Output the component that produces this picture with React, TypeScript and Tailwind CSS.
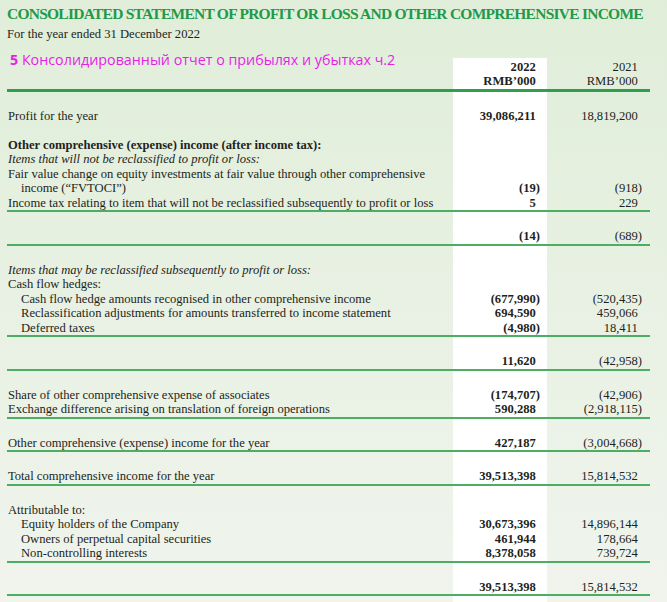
import React from 'react';

type Line = {
  label?: string;
  indent?: boolean;
  bold?: boolean;
  italic?: boolean;
  cur?: string;
  prev?: string;
};

const blocks: Line[][] = [
  [
    { label: 'Profit for the year', cur: '39,086,211', prev: '18,819,200' },
    {},
    { label: 'Other comprehensive (expense) income (after income tax):', bold: true },
    { label: 'Items that will not be reclassified to profit or loss:', italic: true },
    { label: 'Fair value change on equity investments at fair value through other comprehensive' },
    { label: 'income (“FVTOCI”)', indent: true, cur: '(19)', prev: '(918)' },
    {
      label: 'Income tax relating to item that will not be reclassified subsequently to profit or loss',
      cur: '5',
      prev: '229',
    },
  ],
  [{ cur: '(14)', prev: '(689)' }],
  [
    { label: 'Items that may be reclassified subsequently to profit or loss:', italic: true },
    { label: 'Cash flow hedges:' },
    {
      label: 'Cash flow hedge amounts recognised in other comprehensive income',
      indent: true,
      cur: '(677,990)',
      prev: '(520,435)',
    },
    {
      label: 'Reclassification adjustments for amounts transferred to income statement',
      indent: true,
      cur: '694,590',
      prev: '459,066',
    },
    { label: 'Deferred taxes', indent: true, cur: '(4,980)', prev: '18,411' },
  ],
  [{ cur: '11,620', prev: '(42,958)' }],
  [
    { label: 'Share of other comprehensive expense of associates', cur: '(174,707)', prev: '(42,906)' },
    {
      label: 'Exchange difference arising on translation of foreign operations',
      cur: '590,288',
      prev: '(2,918,115)',
    },
  ],
  [{ label: 'Other comprehensive (expense) income for the year', cur: '427,187', prev: '(3,004,668)' }],
  [{ label: 'Total comprehensive income for the year', cur: '39,513,398', prev: '15,814,532' }],
  [
    { label: 'Attributable to:' },
    { label: 'Equity holders of the Company', indent: true, cur: '30,673,396', prev: '14,896,144' },
    { label: 'Owners of perpetual capital securities', indent: true, cur: '461,944', prev: '178,664' },
    { label: 'Non-controlling interests', indent: true, cur: '8,378,058', prev: '739,724' },
  ],
  [{ cur: '39,513,398', prev: '15,814,532' }],
];

// closing bracket hangs past the column edge, so plain numbers get an invisible one
function Num({ v }: { v?: string }) {
  if (!v) return <>&nbsp;</>;
  const neg = v.startsWith('(');
  return (
    <>
      {v}
      {!neg && <span className="invisible">)</span>}
    </>
  );
}

const lineCls = 'h-[14.5px] leading-[14.5px] whitespace-nowrap';

function Block({ lines }: { lines: Line[] }) {
  return (
    <div className="grid grid-cols-[446px_94px_103px] border-b-2 border-[#4cae62]">
      <div className="pt-[17px] pl-[1px]">
        {lines.map((l, i) => (
          <div
            key={i}
            className={`${lineCls} ${l.indent ? 'pl-[13px]' : ''} ${l.bold ? 'font-bold' : ''} ${
              l.italic ? 'italic' : ''
            }`}
          >
            {l.label || '\u00a0'}
          </div>
        ))}
      </div>
      <div className="pt-[17px] pr-[7px] bg-white text-right font-bold">
        {lines.map((l, i) => (
          <div key={i} className={lineCls}>
            <Num v={l.cur} />
          </div>
        ))}
      </div>
      <div className="pt-[17px] pr-[8px] text-right">
        {lines.map((l, i) => (
          <div key={i} className={lineCls}>
            <Num v={l.prev} />
          </div>
        ))}
      </div>
    </div>
  );
}

export default function App() {
  return (
    <div className="w-[667px] h-[602px] overflow-hidden flex flex-col bg-gradient-to-b from-[#e0eed9] to-[#f0f4ed] font-['Liberation_Serif',serif] text-[12.6px] text-[#231f20]">
      {/* Title */}
      <div className="pl-[7px] pt-[4px]">
        <h1 className="text-[15.5px] leading-[20px] font-bold tracking-[-0.75px] text-[#22994a] whitespace-nowrap">
          CONSOLIDATED STATEMENT OF PROFIT OR LOSS AND OTHER COMPREHENSIVE INCOME
        </h1>
        <p className="mt-[3px] leading-[14.5px]">For the year ended 31 December 2022</p>
      </div>

      <div className="mx-[7px] w-[643px] flex-1 flex flex-col">
        {/* Column headers */}
        <div className="mt-[8px] grid grid-cols-[446px_94px_103px] border-b-[3px] border-[#2e9f4c]">
          <div className="pl-[3px] font-['Open_Sans',sans-serif] text-[14.3px] leading-[20px] text-[#e81ee8] whitespace-nowrap">
            <span className="font-bold">5</span> Консолидированный отчет о прибылях и убытках ч.2
          </div>
          <div className="mt-[8px] pt-[2px] pr-[7px] bg-white text-right font-bold">
            <div className={lineCls}>
              2022<span className="invisible">)</span>
            </div>
            <div className={lineCls}>
              RMB’000<span className="invisible">)</span>
            </div>
          </div>
          <div className="mt-[8px] pt-[2px] pr-[8px] text-right">
            <div className={lineCls}>
              2021<span className="invisible">)</span>
            </div>
            <div className={lineCls}>
              RMB’000<span className="invisible">)</span>
            </div>
          </div>
        </div>

        {blocks.map((b, i) => (
          <Block key={i} lines={b} />
        ))}

        {/* white column runs on to the page edge */}
        <div className="flex-1 grid grid-cols-[446px_94px_103px]">
          <div />
          <div className="bg-white" />
          <div />
        </div>
      </div>
    </div>
  );
}
